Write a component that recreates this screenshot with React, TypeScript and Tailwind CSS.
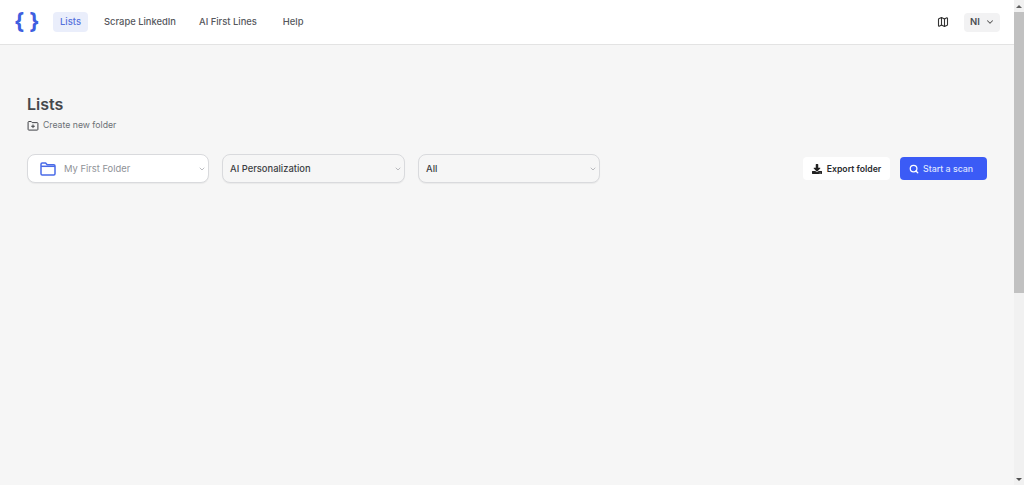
import { ChevronDown, Map, Search } from 'lucide-react';
import { FaDownload } from 'react-icons/fa';

const navItems = [
  { label: 'Lists', className: 'bg-[#eaeefb] text-[#5470dc] w-[35px] justify-center mr-[16px]' },
  { label: 'Scrape LinkedIn', className: 'text-[#55575c] mr-[23px]' },
  { label: 'AI First Lines', className: 'text-[#55575c] mr-[26px]' },
  { label: 'Help', className: 'text-[#55575c]' },
];

function FolderIcon() {
  return (
    <svg width="16" height="14" viewBox="0 0 16 14" fill="none" stroke="#4a6be8" strokeWidth="1.5" strokeLinejoin="round">
      <path d="M1 2.2c0-.7.5-1.2 1.2-1.2h3.4l1.6 1.8h6.6c.7 0 1.2.5 1.2 1.2v7.8c0 .7-.5 1.2-1.2 1.2H2.200c-.7 0-1.200-.5-1.200-1.200z" />
      <path d="M1 4.300h14" />
    </svg>
  );
}

function NewFolderIcon() {
  return (
    <svg className="-mt-[1px]" width="12" height="10" viewBox="0 0 12 11" fill="none" stroke="#3f4145" strokeWidth="1.1" strokeLinejoin="round">
      <path d="M.6 1.300c0-.4.3-.7.7-.7h2.800l1 1.200h5.600c.4 0 .7.300.7.700v6.800c0 .4-.3.700-.7.700H1.300c-.4 0-.7-.3-.7-.7z" />
      <path d="M6 3.800v4M4 5.800h4" />
    </svg>
  );
}

function SelectBox({ label, width, white, muted, children }: { label: string; width: string; white?: boolean; muted?: boolean; children?: React.ReactNode }) {
  return (
    <div className={`${width} ${white ? 'bg-white' : 'bg-[#f6f6f6]'} h-[29px] flex items-center rounded-lg border border-[#d9dadd] pl-[7px] pr-[2px] shadow-[0_1px_1px_rgba(0,0,0,0.05)]`}>
      {children}
      <span className={`flex-1 pt-[2px] text-[9.4px] ${muted ? 'font-normal text-[#8f9297]' : 'font-medium text-[#3d3f44]'}`}>{label}</span>
      <ChevronDown className="h-2 w-2 text-[#9a9ca1]" strokeWidth={2} />
    </div>
  );
}

function Scrollbar() {
  return (
    <div className="w-[10px] h-[485px] bg-[#f1f1f1] flex flex-col items-center shrink-0">
      <div className="h-[12px] flex items-center">
        <div className="border-x-[3px] border-x-transparent border-b-[3px] border-b-[#606060]" />
      </div>
      <div className="w-full h-[281px] bg-[#c1c1c1]" />
      <div className="flex-1" />
      <div className="h-[12px] flex items-center">
        <div className="border-x-[3px] border-x-transparent border-t-[3px] border-t-[#505050]" />
      </div>
    </div>
  );
}

export default function App() {
  return (
    <div className="flex h-[485px] w-[1024px] overflow-hidden bg-[#f6f6f6] font-['Inter',sans-serif]">
      <div className="flex-1 flex flex-col">
        <header className="h-[45px] shrink-0 bg-white border-b border-[#e3e3e3] flex items-center pl-[14px] pr-[14px]">
          <div className="w-[39px] -mt-[2px] flex items-center gap-[5px] text-[22px] leading-none font-bold text-[#3f5fe0] font-['Inter',sans-serif]">
            <span>{'{'}</span>
            <span>{'}'}</span>
          </div>
          <nav className="flex items-center">
            {navItems.map((item) => (
              <div key={item.label} className={`h-[20px] flex items-center rounded text-[9.4px] font-medium ${item.className}`}>
                {item.label}
              </div>
            ))}
          </nav>
          <div className="flex-1" />
          <Map className="h-[12px] w-[12px] text-[#333] mr-[15px]" strokeWidth={2.2} />
          <div className="w-[36px] h-[19px] bg-[#f2f2f3] rounded flex items-center justify-between pl-[6px] pr-[5px] text-[9.5px] font-semibold text-[#4b4d52]">
            NI
            <ChevronDown className="h-[10px] w-[10px] text-[#555]" strokeWidth={2.5} />
          </div>
        </header>
        <main className="flex-1 pl-[27px] pr-[27px] pt-[49px]">
          <h1 className="text-[16px] leading-[20px] font-semibold text-[#46484c] font-['Inter',sans-serif]">Lists</h1>
          <div className="mt-[6px] flex items-center gap-[4px] text-[8.7px] text-[#6b7075] h-[12px]">
            <NewFolderIcon />
            Create new folder
          </div>
          <div className="mt-[22px] flex items-center">
            <SelectBox label="My First Folder" width="w-[182px]" white muted>
              <span className="ml-[5px] mr-[8px] flex"><FolderIcon /></span>
            </SelectBox>
            <div className="w-[13px]" />
            <SelectBox label="AI Personalization" width="w-[183px]" />
            <div className="w-[13px]" />
            <SelectBox label="All" width="w-[182px]" />
            <div className="flex-1" />
            <button className="h-[23px] w-[87px] bg-white rounded flex items-center justify-center gap-[5px] text-[8.7px] font-semibold text-[#2b2d31]">
              <FaDownload className="h-[10px] w-[10px] text-[#222]" />
              <span className="pt-[2px]">Export folder</span>
            </button>
            <button className="ml-[10px] h-[23px] w-[87px] bg-[#3b5bf6] rounded flex items-center pl-[9px] gap-[4px] text-[8.8px] font-medium text-[#dfe4ff]">
              <Search className="h-[10px] w-[10px] text-white" strokeWidth={3} />
              Start a scan
            </button>
          </div>
        </main>
      </div>
      <Scrollbar />
    </div>
  );
}
